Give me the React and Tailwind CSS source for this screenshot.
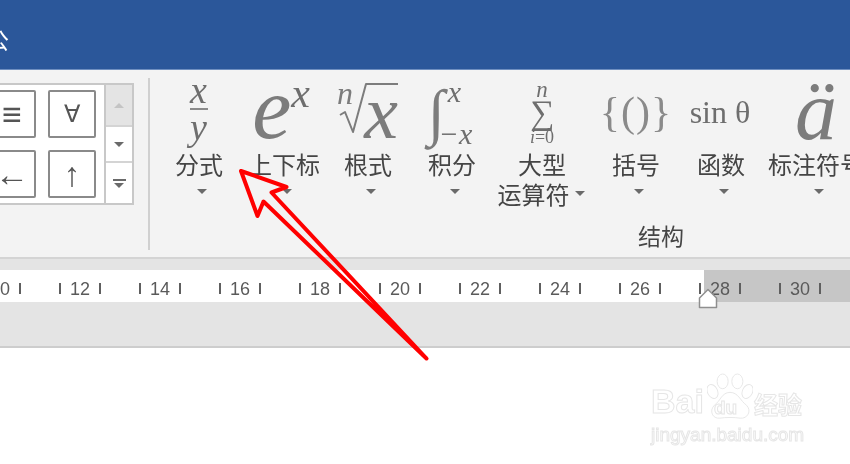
const cjk = { fontFamily: '"Microsoft YaHei","Noto Sans CJK SC",sans-serif' };
const serif = { fontFamily: '"Liberation Serif",serif' };
const sans = { fontFamily: '"Liberation Sans",sans-serif' };

function Caret({ className = "" }) {
  return <span className={"block w-0 h-0 border-x-[5px] border-x-transparent border-t-[5px] border-t-[#6a6a6a] " + className} />;
}

function Tool({ w, icon, label, label2, cls = "" }) {
  return (
    <div className={"flex flex-col items-center shrink-0 " + cls} style={{ width: w }}>
      <div className="h-[72px] w-full flex items-center justify-center text-[#7c7c7c]" style={serif}>{icon}</div>
      <div className="mt-[1px] text-[24px] leading-[30px] text-[#454545] whitespace-nowrap" style={cjk}>{label}</div>
      {label2 ? (
        <div className="flex items-center gap-[5px] -ml-[2px] text-[24px] leading-[29px] text-[#454545] whitespace-nowrap" style={cjk}>{label2}<Caret /></div>
      ) : (
        <Caret className="mt-[10px] ml-[6px]" />
      )}
    </div>
  );
}

function Sym({ children, cls = "" }) {
  return <div className={"w-[48px] h-[48px] shrink-0 bg-white border-2 border-[#8a8a8a] rounded-[2px] flex items-center justify-center text-[#555] " + cls} style={sans}>{children}</div>;
}

function Gallery() {
  return (
    <div className="flex mt-[13px] h-[122px] w-[134px] overflow-hidden border-y-2 border-r-2 border-[#c8c8c8] bg-white shrink-0">
      <div className="w-[104px] shrink-0 flex flex-col gap-[12px] pt-[5px] overflow-hidden">
        <div className="flex gap-[12px] -ml-[12px]">
          <Sym cls="text-[34px] leading-none">≡</Sym>
          <Sym cls="text-[24px]">∀</Sym>
        </div>
        <div className="flex gap-[12px] -ml-[12px]">
          <Sym cls="text-[34px] leading-none">←</Sym>
          <Sym cls="text-[34px] leading-none text-[#4a5a80]">↑</Sym>
        </div>
      </div>
      <div className="w-[28px] shrink-0 border-l-2 border-[#c8c8c8] flex flex-col">
        <div className="h-[40px] bg-[#e4e4e4] flex items-center justify-center">
          <span className="block w-0 h-0 border-x-[5px] border-x-transparent border-b-[5px] border-b-[#c4c4c4]" />
        </div>
        <div className="h-[38px] border-y-2 border-[#d4d4d4] flex items-center justify-center"><Caret /></div>
        <div className="flex-1 flex flex-col items-center justify-center gap-[2px]">
          <span className="block w-[13px] h-[2px] bg-[#6a6a6a]" />
          <Caret />
        </div>
      </div>
    </div>
  );
}

const nums = [10, 12, 14, 16, 18, 20, 22, 24, 26, 28, 30, 32];

function Ruler() {
  return (
    <div className="relative h-[32px] flex overflow-hidden">
      <div className="w-[704px] bg-white" />
      <div className="flex-1 bg-[#c6c6c6]" />
      <div className="absolute inset-0 flex -ml-[40px]">
        {nums.map((n) => (
          <div key={n} className="w-[80px] shrink-0 flex items-center justify-between px-[19px] pt-[5px]">
            <span className="block w-[2px] h-[11px] bg-[#5f5f5f]" />
            <span className="text-[18px] leading-none text-[#5a5a5a]" style={sans}>{n}</span>
            <span className="block w-[2px] h-[11px] bg-[#5f5f5f]" />
          </div>
        ))}
      </div>
    </div>
  );
}

export default function App() {
  return (
    <div className="relative w-[850px] h-[464px] overflow-hidden bg-white blur-[0.4px]">
      <div className="h-[70px] bg-[#2b579a] border-b border-[#6f8fc0] flex items-center overflow-hidden">
        <span className="text-[23px] leading-none text-white -ml-[14px] mt-[9px]" style={cjk}>公</span>
      </div>
      <div className="h-[189px] bg-[#f3f3f3] border-b-2 border-[#d4d4d4] flex overflow-hidden">
        <Gallery />
        <div className="w-[2px] h-[172px] mt-[8px] ml-[14px] bg-[#d0d0d0] shrink-0" />
        <div className="w-[1022px] shrink-0 flex flex-col">
          <div className="flex pl-[7px] pt-[6px]">
            <Tool w={84} label="分式" icon={
              <div className="flex flex-col items-center italic text-[38px] leading-[30px] text-[#6e6e6e] -ml-[1px] -mt-[8px]">
                <span>x</span><span className="w-[18px] h-[2px] bg-[#8a8a8a] mt-[3px]" /><span className="mt-[2px]">y</span>
              </div>} />
            <Tool w={86} label="上下标" icon={
              <div className="flex items-start italic -mt-[6px] -ml-[6px]">
                <span className="text-[88px] leading-[72px]">e</span>
                <span className="text-[42px] leading-[34px] text-[#6e6e6e] mt-[3px]">x</span>
              </div>} />
            <Tool w={82} label="根式" icon={
              <div className="relative w-[62px] h-[56px] -mt-[4px]">
                <svg className="absolute inset-0" width="62" height="56" viewBox="0 0 62 56" fill="none" stroke="#7c7c7c">
                  <path d="M3 33 L8 30 L16 50 L29 2 H61" strokeWidth="2" strokeLinejoin="round" />
                </svg>
                <span className="absolute left-0 -top-[4px] italic text-[32px] leading-[30px]">n</span>
                <span className="absolute right-[1px] -bottom-[2px] italic text-[76px] leading-[56px]">x</span>
              </div>} />
            <Tool w={86} label="积分" icon={
              <div className="flex items-center italic -ml-[4px] -mt-[1px]">
                <span className="text-[62px] leading-[62px] not-italic">∫</span>
                <div className="flex flex-col justify-between h-[64px] text-[#6e6e6e] -ml-[6px]">
                  <span className="text-[30px] leading-[24px] ml-[9px]">x</span>
                  <span className="text-[30px] leading-[24px] whitespace-nowrap translate-y-[2px]">−x</span>
                </div>
              </div>} />
            <Tool w={94} label="大型" label2="运算符" icon={
              <div className="flex flex-col items-center text-[#6e6e6e] mt-[3px]">
                <span className="italic text-[23px] leading-[16px]">n</span>
                <span className="text-[34px] leading-[30px]">∑</span>
                <span className="text-[18px] leading-[18px]"><i>i</i>=0</span>
              </div>} />
            <Tool w={94} label="括号" icon={<span className="text-[42px] leading-none tracking-[1px] text-[#8a8a8a]">{"{()}"}</span>} />
            <Tool w={76} label="函数" icon={<span className="text-[32px] leading-none whitespace-nowrap text-[#6e6e6e] -ml-[2px]">sin θ</span>} />
            <Tool w={120} cls="-ml-[3px]" label="标注符号" icon={<span className="italic text-[84px] leading-none">ä</span>} />
          </div>
          <div className="mt-auto mb-[8px] text-center text-[23px] leading-[28px] text-[#454545]" style={cjk}>结构</div>
        </div>
      </div>
      <div className="h-[11px] bg-[#e4e4e4]" />
      <Ruler />
      <div className="h-[46px] bg-[#e4e4e4] border-b-2 border-[#cdcdcd]" />

      {/* indent marker */}
      <svg className="absolute left-[698px] top-[287px]" width="20" height="22" viewBox="0 0 20 22">
        <path d="M1.5 20.5 V11 L10 2.5 L18.5 11 V20.5 Z" fill="#fff" stroke="#8f8f8f" strokeWidth="1.5" strokeLinejoin="round" />
      </svg>

      {/* annotation arrow */}
      <svg className="absolute inset-0" width="850" height="464" viewBox="0 0 850 464">
        <path d="M241 171 L286.5 187 L271.5 192.5 L426.5 358.5 L263.5 201.5 L257.5 216 Z" fill="none" stroke="#ff0000" strokeWidth="4" strokeLinejoin="round" strokeLinecap="round" />
      </svg>

      {/* watermark */}
      <div className="absolute left-[651px] top-[373px] w-[155px] text-white">
        <div className="relative h-[48px] flex items-end">
          <span className="text-[34px] leading-[40px] font-bold [-webkit-text-stroke:1px_#e6e6e6]" style={sans}>Bai</span>
          <svg width="46" height="48" viewBox="0 0 50 52" className="shrink-0 ml-[3px]" fill="#fff" stroke="#e6e6e6" strokeWidth="1">
            <ellipse cx="6" cy="20" rx="5.5" ry="8" transform="rotate(-25 6 20)" />
            <ellipse cx="17" cy="9" rx="6" ry="8" />
            <ellipse cx="33" cy="9" rx="6" ry="8" />
            <ellipse cx="44" cy="20" rx="5.5" ry="8" transform="rotate(25 44 20)" />
            <path d="M25 21 C34 21 36 30 43 35 C49 41 44 50 36 49 C30 48 20 48 14 49 C6 50 2 41 8 35 C15 30 16 21 25 21 Z" />
          </svg>
          <span className="absolute left-[63px] bottom-[1px] text-[19px] leading-[24px] font-bold [-webkit-text-stroke:1px_#e6e6e6]" style={sans}>du</span>
          <span className="ml-[1px] text-[24px] leading-[34px] font-bold [-webkit-text-stroke:1px_#e6e6e6] whitespace-nowrap" style={cjk}>经验</span>
        </div>
        <div className="mt-[4px] text-[19px] leading-[20px] whitespace-nowrap [-webkit-text-stroke:1px_#e6e6e6]" style={sans}>jingyan.baidu.com</div>
      </div>
    </div>
  );
}
